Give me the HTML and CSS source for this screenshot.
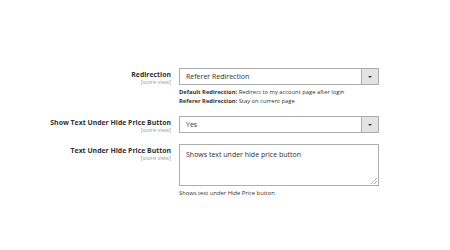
FILE: index.html
```html
<!DOCTYPE html>
<html lang="en">
<head>
  <meta charset="UTF-8" />
  <title>Hide Price Settings</title>
  <link rel="stylesheet" href="styles.css">
</head>
<body>
  <div class="fieldset">
    <div class="field">
      <div class="label">
        <span class="title">Redirection</span>
        <span class="scope">[store view]</span>
      </div>
      <div class="control">
        <div class="select">
          <span>Referer Redirection</span>
          <span class="arrow"></span>
        </div>
        <div class="note">
          <b>Default Redirection:</b> Redirect to my account page after login<br>
          <b>Referer Redirection:</b> Stay on current page
        </div>
      </div>
    </div>

    <div class="field">
      <div class="label">
        <span class="title">Show Text Under Hide Price Button</span>
        <span class="scope">[store view]</span>
      </div>
      <div class="control">
        <div class="select">
          <span>Yes</span>
          <span class="arrow"></span>
        </div>
      </div>
    </div>

    <div class="field">
      <div class="label">
        <span class="title">Text Under Hide Price Button</span>
        <span class="scope">[store view]</span>
      </div>
      <div class="control">
        <div class="textarea">
          Shows text under hide price button
          <svg class="grip" width="7" height="7" viewBox="0 0 7 7">
            <path d="M7 1 L1 7 M7 4 L4 7" stroke="#999" stroke-width="0.8" fill="none"/>
          </svg>
        </div>
        <div class="note">Shows text under Hide Price button</div>
      </div>
    </div>
  </div>
</body>
</html>
```

FILE: styles.css
```css
body {
  margin: 0;
  background: #fff;
  font-family: 'Open Sans', 'Noto Sans', sans-serif;
  color: #303030;
}

.fieldset {
  padding-top: 68px;
  display: flex;
  flex-direction: column;
}

.field {
  display: flex;
  gap: 8px;
  margin-bottom: 11px;
}

.field + .field {
  margin-bottom: 10px;
}

.label {
  width: 171px;
  display: flex;
  flex-direction: column;
  align-items: flex-end;
  padding-top: 2px;
}

.title {
  font-size: 6.9px;
  font-weight: 700;
  line-height: 9px;
}

.scope {
  font-size: 5.6px;
  color: #999;
  line-height: 7px;
}

.control {
  width: 200px;
}

.select {
  height: 17px;
  border: 1px solid #adadad;
  box-sizing: border-box;
  display: flex;
  align-items: center;
  justify-content: space-between;
  font-size: 7px;
  padding-left: 6px;
}

.arrow {
  width: 16px;
  height: 100%;
  background: #e3e3e3;
  border-left: 1px solid #adadad;
  position: relative;
}

.arrow::after {
  content: "";
  position: absolute;
  left: 6px;
  top: 7px;
  border-left: 2px solid transparent;
  border-right: 2px solid transparent;
  border-top: 2px solid #41362f;
}

.note {
  font-size: 5.8px;
  line-height: 8.5px;
  margin-top: 3px;
}

.textarea {
  height: 42px;
  border: 1px solid #adadad;
  box-sizing: border-box;
  font-size: 7px;
  padding: 5px 6px;
  position: relative;
}

.grip {
  position: absolute;
  right: 1px;
  bottom: 1px;
}
```
